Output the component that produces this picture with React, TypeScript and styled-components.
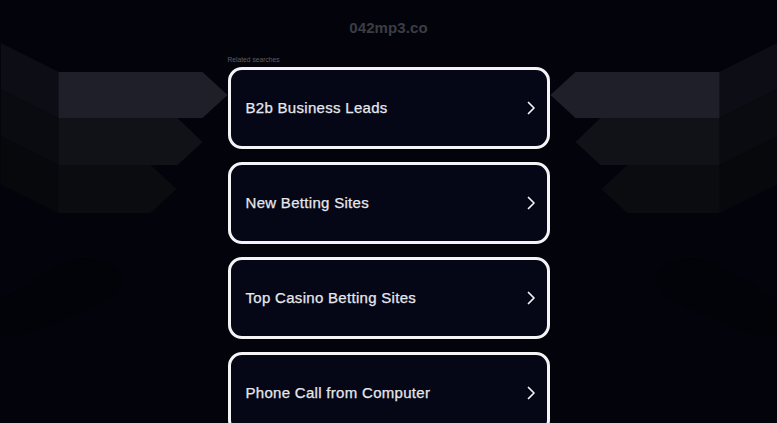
import styled, { createGlobalStyle } from 'styled-components'

const GlobalStyle = createGlobalStyle`
  html, body {
    margin: 0;
    padding: 0;
    background: #03040b;
  }
  * {
    box-sizing: border-box;
  }
`

const Page = styled.div`
  position: relative;
  min-height: 423px;
  overflow: hidden;
  background: #03040b;
  font-family: 'Liberation Sans', Arial, sans-serif;
`

const Backdrop = styled.svg`
  position: absolute;
  top: 0;
  left: 50%;
  transform: translateX(-50%);
  pointer-events: none;
`

const Content = styled.div`
  position: relative;
  display: flex;
  flex-direction: column;
  align-items: center;
  padding-top: 18px;
`

const DomainTitle = styled.h1`
  margin: 0 0 18px;
  font-size: 15px;
  line-height: 20px;
  font-weight: 700;
  letter-spacing: 0.1px;
  color: #3b3d45;
`

const Column = styled.div`
  width: 322px;
  display: flex;
  flex-direction: column;
`

const Caption = styled.div`
  font-size: 6.7px;
  line-height: 8px;
  color: #5b5e68;
  margin-bottom: 3px;
`

const List = styled.div`
  display: flex;
  flex-direction: column;
  gap: 13px;
`

const LinkCard = styled.a`
  height: 82px;
  display: flex;
  align-items: center;
  justify-content: space-between;
  padding: 0 11px 0 15px;
  border: 3px solid #f4f4f7;
  border-radius: 14px;
  background: #050716;
  color: #e7e8ee;
  text-decoration: none;
  cursor: pointer;
`

const LinkLabel = styled.span`
  font-size: 15px;
  line-height: 18px;
  letter-spacing: 0.3px;
  font-weight: 400;
  -webkit-text-stroke: 0.25px #e7e8ee;
`

const Chevron = () => (
  <svg width="10" height="14" viewBox="0 0 10 14" fill="none">
    <path d="M2.5 1.5 L8 7 L2.5 12.5" stroke="#f2f2f5" strokeWidth="1.7" strokeLinecap="round" strokeLinejoin="round" />
  </svg>
)

const Wings = () => (
  <g>
    <polygon points="0,43 58,72 58,118 0,89" fill="#0d0e15" />
    <polygon points="0,89 58,118 58,165 0,136" fill="#0a0b10" />
    <polygon points="0,136 58,165 58,213 0,184" fill="#07080c" />
    <polygon points="58,72 202,72 227,95 202,118 58,118" fill="#1e1f28" />
    <polygon points="58,118 177,118 202,142 177,165 58,165" fill="#111218" />
    <polygon points="58,165 150,165 176,189 150,213 58,213" fill="#0b0c10" />
    <path d="M0 300 L62 263 Q82 254 106 261 Q132 274 114 296 L40 330 Q12 340 0 334 Z" fill="#020308" />
  </g>
)

const searches = ['B2b Business Leads', 'New Betting Sites', 'Top Casino Betting Sites', 'Phone Call from Computer']

const App = () => {
  return (
    <>
      <GlobalStyle />
      <Page>
        <Backdrop width="777" height="423" viewBox="0 0 777 423">
          <Wings />
          <g transform="translate(777 0) scale(-1 1)">
            <Wings />
          </g>
        </Backdrop>
        <Content>
          <DomainTitle>042mp3.co</DomainTitle>
          <Column>
            <Caption>Related searches</Caption>
            <List>
              {searches.map((s) => (
                <LinkCard key={s}>
                  <LinkLabel>{s}</LinkLabel>
                  <Chevron />
                </LinkCard>
              ))}
            </List>
          </Column>
        </Content>
      </Page>
    </>
  )
}

export default App
